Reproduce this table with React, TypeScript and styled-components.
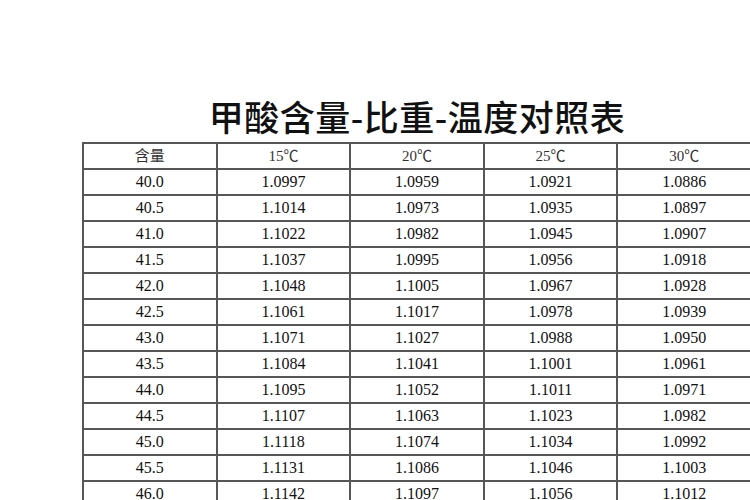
import React from "react";
import styled, { createGlobalStyle } from "styled-components";

const GlobalStyle = createGlobalStyle`
  html, body {
    margin: 0;
    padding: 0;
    background: #ffffff;
  }
`;

const temps = ["15℃", "20℃", "25℃", "30℃"];

const rows: [string, string, string, string, string][] = [
  ["40.0", "1.0997", "1.0959", "1.0921", "1.0886"],
  ["40.5", "1.1014", "1.0973", "1.0935", "1.0897"],
  ["41.0", "1.1022", "1.0982", "1.0945", "1.0907"],
  ["41.5", "1.1037", "1.0995", "1.0956", "1.0918"],
  ["42.0", "1.1048", "1.1005", "1.0967", "1.0928"],
  ["42.5", "1.1061", "1.1017", "1.0978", "1.0939"],
  ["43.0", "1.1071", "1.1027", "1.0988", "1.0950"],
  ["43.5", "1.1084", "1.1041", "1.1001", "1.0961"],
  ["44.0", "1.1095", "1.1052", "1.1011", "1.0971"],
  ["44.5", "1.1107", "1.1063", "1.1023", "1.0982"],
  ["45.0", "1.1118", "1.1074", "1.1034", "1.0992"],
  ["45.5", "1.1131", "1.1086", "1.1046", "1.1003"],
  ["46.0", "1.1142", "1.1097", "1.1056", "1.1012"],
];

const Page = styled.div`
  width: 750px;
  height: 500px;
  overflow: hidden;
  box-sizing: border-box;
  padding: 95px 0 0 82px;
`;

const Sheet = styled.div`
  width: 670px;
`;

const Title = styled.h1`
  margin: 0 0 5px;
  text-align: center;
  font-family: "Noto Sans CJK SC", "Noto Sans", sans-serif;
  font-weight: 500;
  font-size: 35px;
  line-height: 42px;
  color: #111;
  letter-spacing: 0.5px;
`;

const Table = styled.table`
  width: 670px;
  border-collapse: collapse;
  table-layout: fixed;
`;

const Cell = styled.td<{ $head?: boolean }>`
  height: 24px;
  padding: 0;
  border: 2px solid #575757;
  text-align: center;
  vertical-align: middle;
  font-family: "Liberation Serif", "Noto Sans CJK SC", serif;
  font-size: ${(p) => (p.$head ? "15px" : "16px")};
  color: ${(p) => (p.$head ? "#333" : "#111")};
  line-height: 24px;
`;

export default function App() {
  return (
    <>
      <GlobalStyle />
      <Page>
        <Sheet>
          <Title>甲酸含量-比重-温度对照表</Title>
          <Table>
            <tbody>
              <tr>
                <Cell $head>含量</Cell>
                {temps.map((t) => (
                  <Cell $head key={t}>
                    {t}
                  </Cell>
                ))}
              </tr>
              {rows.map((r) => (
                <tr key={r[0]}>
                  {r.map((v, i) => (
                    <Cell key={i}>{v}</Cell>
                  ))}
                </tr>
              ))}
            </tbody>
          </Table>
        </Sheet>
      </Page>
    </>
  );
}
